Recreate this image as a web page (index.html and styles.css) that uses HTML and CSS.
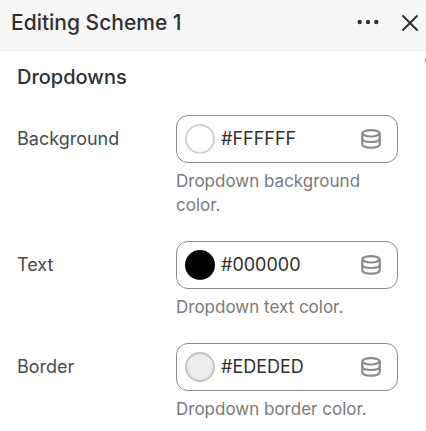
FILE: index.html
```html
<!DOCTYPE html>
<html lang="en">

<head>
    <meta charset="UTF-8">
    <meta name="viewport" content="width=device-width, initial-scale=1.0">
    <title>Editing Scheme 1</title>
    <link rel="stylesheet" href="styles.css">
</head>

<body>

    <!-- Shared icon -->
    <svg class="sprite" aria-hidden="true">
        <symbol id="icon-database" viewBox="0 0 22 22">
            <ellipse cx="11" cy="5.3" rx="8.7" ry="3.2" />
            <path d="M2.3 5.3v11c0 2 3.9 3.3 8.7 3.3s8.7-1.3 8.7-3.3v-11" />
            <path d="M2.3 10.8c0 2 3.9 3.2 8.7 3.2s8.7-1.2 8.7-3.2" />
        </symbol>
    </svg>

    <header class="header">
        <h1 class="header-title">Editing Scheme 1</h1>
        <button type="button" class="icon-button" aria-label="More actions">
            <svg width="24" height="24" viewBox="0 0 24 24" fill="currentColor">
                <circle cx="3.7" cy="11" r="2.2" />
                <circle cx="12" cy="11" r="2.2" />
                <circle cx="20.3" cy="11" r="2.2" />
            </svg>
        </button>
        <button type="button" class="icon-button" aria-label="Close">
            <svg width="24" height="24" viewBox="0 0 24 24" fill="none" stroke="currentColor" stroke-width="2" stroke-linecap="round">
                <path d="M5 5l14 14M19 5l-14 14" />
            </svg>
        </button>
    </header>

    <main class="panel">
        <span class="scroll-arrow"></span>
        <h2 class="section-title">Dropdowns</h2>

        <div class="row">
            <label class="label" for="background">Background</label>
            <div class="control">
                <div class="field">
                    <button type="button" class="swatch swatch-white" aria-label="Pick background color"></button>
                    <input type="text" id="background" class="value" value="#FFFFFF">
                    <button type="button" class="source" aria-label="Connect background source">
                        <svg class="source-icon"><use href="#icon-database" /></svg>
                    </button>
                </div>
                <p class="help">Dropdown background color.</p>
            </div>
        </div>

        <div class="row">
            <label class="label" for="text">Text</label>
            <div class="control">
                <div class="field">
                    <button type="button" class="swatch swatch-black" aria-label="Pick text color"></button>
                    <input type="text" id="text" class="value" value="#000000">
                    <button type="button" class="source" aria-label="Connect text source">
                        <svg class="source-icon"><use href="#icon-database" /></svg>
                    </button>
                </div>
                <p class="help">Dropdown text color.</p>
            </div>
        </div>

        <div class="row">
            <label class="label" for="border">Border</label>
            <div class="control">
                <div class="field">
                    <button type="button" class="swatch swatch-gray" aria-label="Pick border color"></button>
                    <input type="text" id="border" class="value" value="#EDEDED">
                    <button type="button" class="source" aria-label="Connect border source">
                        <svg class="source-icon"><use href="#icon-database" /></svg>
                    </button>
                </div>
                <p class="help">Dropdown border color.</p>
            </div>
        </div>
    </main>

</body>

</html>
```
FILE: styles.css
```css
* {
    box-sizing: border-box;
}

body {
    margin: 0;
    background-color: #fff;
    color: #303030;
    font-family: Inter, "Liberation Sans", sans-serif;
    font-size: 18px;
    line-height: 24px;
}

h1,
h2,
p {
    margin: 0;
}

button {
    padding: 0;
    border: none;
    background: none;
    color: inherit;
    cursor: pointer;
}

.sprite {
    display: none;
}

.header {
    display: flex;
    align-items: center;
    gap: 18px;
    padding: 11px 4px 15px 11px;
    background-color: #f7f7f7;
    border-bottom: 1px solid #ebebeb;
}

.header-title {
    flex: 1;
    font-size: 21px;
    font-weight: 550;
    line-height: 24px;
}

.icon-button {
    display: flex;
}

.panel {
    position: relative;
    padding: 14px 28px 0 17px;
}

/* Tip of the scroll arrow at the panel edge */
.scroll-arrow {
    position: absolute;
    top: 8px;
    right: 0;
    width: 1px;
    height: 3px;
    background-color: #8a8a8a;
}

.section-title {
    margin-bottom: 26px;
    font-size: 20px;
    font-weight: 550;
    line-height: 24px;
}

.row {
    display: flex;
    margin-bottom: 24px;
}

.row:last-child {
    margin-bottom: 0;
}

.label {
    width: 159px;
    padding: 12px 0;
    color: #4a4a4a;
}

.control {
    flex: 1;
    min-width: 0;
}

.field {
    display: flex;
    align-items: center;
    gap: 6px;
    height: 48px;
    padding: 0 15px 0 8px;
    border: 1px solid #8a8a8a;
    border-radius: 12px;
}

.swatch {
    flex: none;
    width: 30px;
    height: 30px;
    border: 2px solid rgba(0, 0, 0, 0.18);
    border-radius: 50%;
}

.swatch-white {
    background-color: #fff;
}

.swatch-black {
    background-color: #000;
}

.swatch-gray {
    background-color: #ededed;
}

.value {
    flex: 1;
    min-width: 0;
    padding: 0;
    border: none;
    outline: none;
    background: none;
    color: #303030;
    font: inherit;
}

.source {
    display: flex;
    color: #8a8a8a;
}

.source-icon {
    width: 22px;
    height: 22px;
    fill: none;
    stroke: currentColor;
    stroke-width: 2.2;
}

.help {
    margin-top: 6px;
    color: #7a7a7a;
    font-size: 17px;
}
```
